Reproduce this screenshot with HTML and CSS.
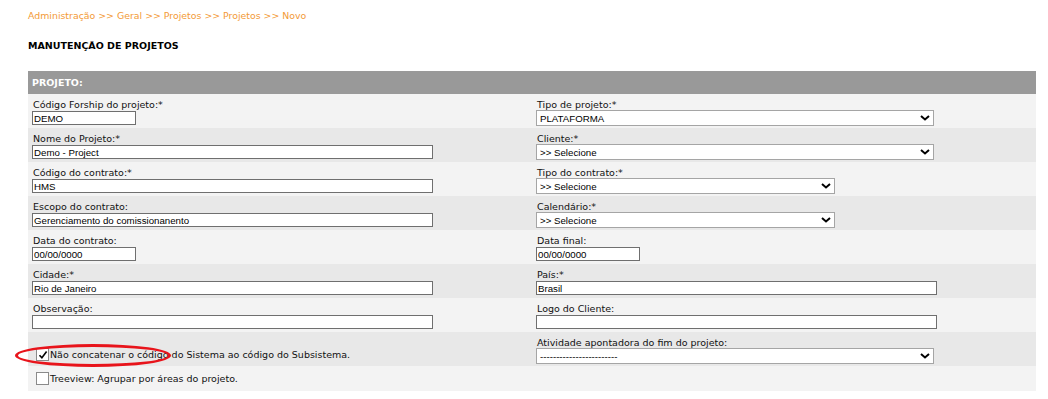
FILE: index.html
```html
<!DOCTYPE html>
<html lang="pt-BR">
<head>
    <meta charset="UTF-8">
    <title>Manutenção de Projetos</title>
    <link rel="stylesheet" href="styles.css">
</head>
<body>
    <div class="page">
        <div class="breadcrumb">Administração &gt;&gt; Geral &gt;&gt; Projetos &gt;&gt; Projetos &gt;&gt; Novo</div>
        <h1 class="title">MANUTENÇÃO DE PROJETOS</h1>

        <div class="form">
            <div class="form-head">PROJETO:</div>

            <div class="row light">
                <div class="cell">
                    <label>Código Forship do projeto:*</label>
                    <input class="field short" type="text" value="DEMO">
                </div>
                <div class="cell right">
                    <label>Tipo de projeto:*</label>
                    <div class="select wide">
                        <span>PLATAFORMA</span>
                        <svg width="10" height="6" viewBox="0 0 10 6"><path d="M1 1l4 3.5L9 1" fill="none" stroke="#000" stroke-width="2"/></svg>
                    </div>
                </div>
            </div>

            <div class="row dark">
                <div class="cell">
                    <label>Nome do Projeto:*</label>
                    <input class="field long" type="text" value="Demo - Project">
                </div>
                <div class="cell right">
                    <label>Cliente:*</label>
                    <div class="select wide">
                        <span>&gt;&gt; Selecione</span>
                        <svg width="10" height="6" viewBox="0 0 10 6"><path d="M1 1l4 3.5L9 1" fill="none" stroke="#000" stroke-width="2"/></svg>
                    </div>
                </div>
            </div>

            <div class="row light">
                <div class="cell">
                    <label>Código do contrato:*</label>
                    <input class="field long" type="text" value="HMS">
                </div>
                <div class="cell right">
                    <label>Tipo do contrato:*</label>
                    <div class="select medium">
                        <span>&gt;&gt; Selecione</span>
                        <svg width="10" height="6" viewBox="0 0 10 6"><path d="M1 1l4 3.5L9 1" fill="none" stroke="#000" stroke-width="2"/></svg>
                    </div>
                </div>
            </div>

            <div class="row dark">
                <div class="cell">
                    <label>Escopo do contrato:</label>
                    <input class="field long" type="text" value="Gerenciamento do comissionanento">
                </div>
                <div class="cell right">
                    <label>Calendário:*</label>
                    <div class="select medium">
                        <span>&gt;&gt; Selecione</span>
                        <svg width="10" height="6" viewBox="0 0 10 6"><path d="M1 1l4 3.5L9 1" fill="none" stroke="#000" stroke-width="2"/></svg>
                    </div>
                </div>
            </div>

            <div class="row light">
                <div class="cell">
                    <label>Data do contrato:</label>
                    <input class="field short" type="text" value="00/00/0000">
                </div>
                <div class="cell right">
                    <label>Data final:</label>
                    <input class="field short" type="text" value="00/00/0000">
                </div>
            </div>

            <div class="row dark">
                <div class="cell">
                    <label>Cidade:*</label>
                    <input class="field long" type="text" value="Rio de Janeiro">
                </div>
                <div class="cell right">
                    <label>País:*</label>
                    <input class="field long" type="text" value="Brasil">
                </div>
            </div>

            <div class="row light">
                <div class="cell">
                    <label>Observação:</label>
                    <input class="field long" type="text" value="">
                </div>
                <div class="cell right">
                    <label>Logo do Cliente:</label>
                    <input class="field long" type="text" value="">
                </div>
            </div>

            <div class="row dark">
                <div class="cell bottom">
                    <div class="check">
                        <span class="box"><svg width="10" height="10" viewBox="0 0 10 10"><path d="M1.5 5.2l2.4 2.6L8.6 1.6" fill="none" stroke="#000" stroke-width="1.6"/></svg></span>
                        <span>Não concatenar o código do Sistema ao código do Subsistema.</span>
                    </div>
                    <div class="mark"></div>
                </div>
                <div class="cell right">
                    <label>Atividade apontadora do fim do projeto:</label>
                    <div class="select wide">
                        <span>------------------------</span>
                        <svg width="10" height="6" viewBox="0 0 10 6"><path d="M1 1l4 3.5L9 1" fill="none" stroke="#000" stroke-width="2"/></svg>
                    </div>
                </div>
            </div>

            <div class="row light last">
                <div class="cell">
                    <div class="check">
                        <span class="box"></span>
                        <span>Treeview: Agrupar por áreas do projeto.</span>
                    </div>
                </div>
            </div>
        </div>
    </div>
</body>
</html>
```

FILE: styles.css
```css
body {
    margin: 0;
    padding: 0;
    background-color: #fff;
    font-family: "DejaVu Sans", Verdana, sans-serif;
    font-size: 9.5px;
    color: #111;
}

.page {
    padding: 9px 0 0 28px;
    width: 1008px;
}

.breadcrumb {
    color: #f39a36; /* orange links */
    line-height: 13px;
    font-size: 9.4px;
}

.title {
    margin: 17px 0 19px;
    font-size: 9.5px;
    line-height: 13px;
    font-weight: bold;
    color: #000;
}

.form-head {
    background-color: #999;
    color: #fff;
    font-weight: bold;
    height: 23px;
    line-height: 23px;
    padding-left: 4px;
}

.row {
    display: grid;
    grid-template-columns: 508px 1fr;
    height: 34px;
}

.row.light {
    background-color: #f3f3f3;
}

.row.dark {
    background-color: #e8e8e8;
}

.row.last {
    height: 25px;
}

.cell {
    padding: 4px 0 0 4px;
    display: flex;
    flex-direction: column;
    align-items: flex-start;
    position: relative;
}

.cell.right {
    padding-left: 0;
}

.cell.bottom {
    justify-content: flex-end;
    padding-bottom: 5px;
}

label {
    display: block;
    line-height: 13px;
    padding-left: 1px;
}

.field {
    box-sizing: border-box;
    height: 14px;
    margin: 0;
    padding: 0 2px 0 1px;
    border: 1px solid #6f6f6f;
    background-color: #fff;
    font-family: "Liberation Sans", Arial, sans-serif;
    font-size: 9.7px;
    color: #000;
}

.field.short {
    width: 104px;
}

.field.long {
    width: 401px;
}

.select {
    box-sizing: border-box;
    height: 16px;
    margin-top: -1px;
    border: 1px solid #a5a5a5;
    background-color: #fff;
    display: flex;
    align-items: center;
    justify-content: space-between;
    padding: 0 3px 0 3px;
    font-family: "Liberation Sans", Arial, sans-serif;
    font-size: 9.7px;
    color: #000;
}

.select.wide {
    width: 398px;
}

.select.medium {
    width: 299px;
}

.check {
    display: flex;
    align-items: center;
    gap: 1px;
    padding-left: 4px;
    line-height: 13px;
    font-size: 9.5px;
}

.box {
    box-sizing: border-box;
    width: 13px;
    height: 13px;
    border: 1px solid #8a8a8a;
    background-color: #fff;
    display: flex;
    align-items: center;
    justify-content: center;
}

.row.last .cell {
    padding-top: 6px;
}

/* red annotation round the first checkbox */
.mark {
    position: absolute;
    left: -13px;
    top: 12px;
    width: 150px;
    height: 17px;
    border: 3px solid #e8141b;
    border-radius: 50%;
}
```
